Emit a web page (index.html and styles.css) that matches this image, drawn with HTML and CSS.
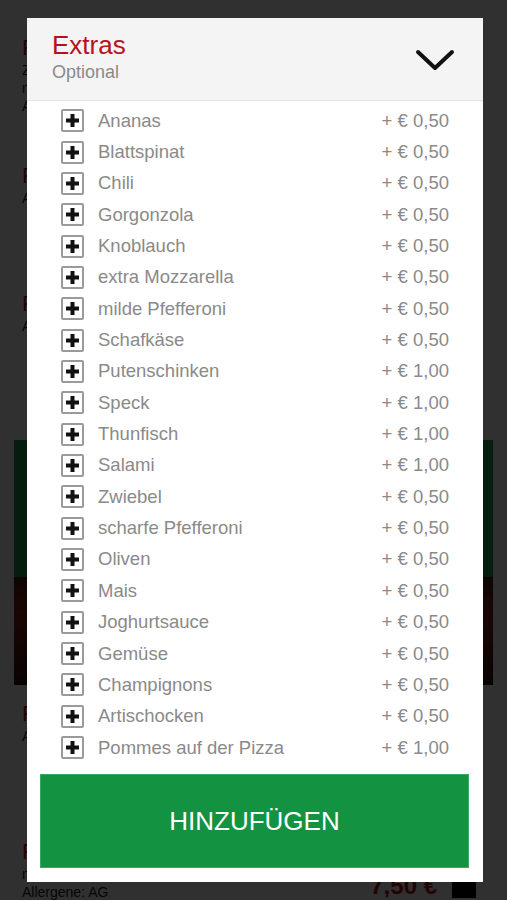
FILE: index.html
```html
<!DOCTYPE html>
<html lang="de">
<head>
    <meta charset="UTF-8">
    <meta name="viewport" content="width=device-width, initial-scale=1.0">
    <title>Extras</title>
    <link rel="stylesheet" href="styles.css">
</head>
<body>

    <div class="page">
        <div class="menu-item">
            <div class="item-info">
                <div class="item-title">Pizza</div>
                <div class="item-desc">Zutaten</div>
                <div class="item-desc">mit</div>
                <div class="item-desc">Allergene</div>
            </div>
        </div>
        <div class="menu-item">
            <div class="item-info">
                <div class="item-title">Pizza</div>
                <div class="item-desc">Allergene</div>
            </div>
        </div>
        <div class="menu-item">
            <div class="item-info">
                <div class="item-title">Pizza</div>
                <div class="item-desc">Allergene</div>
            </div>
        </div>

        <div class="banner"></div>

        <div class="menu-item">
            <div class="item-info">
                <div class="item-title">Pizza</div>
                <div class="item-desc">Allergene</div>
            </div>
        </div>
        <div class="menu-item last">
            <div class="item-info">
                <div class="item-title">Pizza</div>
                <div class="item-desc">mit</div>
                <div class="item-desc">Allergene: AG</div>
            </div>
            <div class="item-buy"><span class="item-price">7,50 €</span><span class="item-add"></span></div>
        </div>
    </div>

    <div class="overlay">
        <div class="modal">
            <div class="modal-header">
                <div class="modal-heading">
                    <div class="modal-title">Extras</div>
                    <div class="modal-sub">Optional</div>
                </div>
                <svg class="chevron" width="40" height="25" viewBox="0 0 40 25">
                    <path d="M3 5 L20 21 L37 5" fill="none" stroke="#111" stroke-width="4" stroke-linecap="round" stroke-linejoin="round"/>
                </svg>
            </div>

            <ul class="extras">
                <li><span class="check"><svg width="13" height="13" viewBox="0 0 13 13"><path d="M4.5 0 H8.5 V4.5 H13 V8.5 H8.5 V13 H4.5 V8.5 H0 V4.5 H4.5 Z" fill="#111"/></svg></span><span class="name">Ananas</span><span class="price">+ € 0,50</span></li>
                <li><span class="check"><svg width="13" height="13" viewBox="0 0 13 13"><path d="M4.5 0 H8.5 V4.5 H13 V8.5 H8.5 V13 H4.5 V8.5 H0 V4.5 H4.5 Z" fill="#111"/></svg></span><span class="name">Blattspinat</span><span class="price">+ € 0,50</span></li>
                <li><span class="check"><svg width="13" height="13" viewBox="0 0 13 13"><path d="M4.5 0 H8.5 V4.5 H13 V8.5 H8.5 V13 H4.5 V8.5 H0 V4.5 H4.5 Z" fill="#111"/></svg></span><span class="name">Chili</span><span class="price">+ € 0,50</span></li>
                <li><span class="check"><svg width="13" height="13" viewBox="0 0 13 13"><path d="M4.5 0 H8.5 V4.5 H13 V8.5 H8.5 V13 H4.5 V8.5 H0 V4.5 H4.5 Z" fill="#111"/></svg></span><span class="name">Gorgonzola</span><span class="price">+ € 0,50</span></li>
                <li><span class="check"><svg width="13" height="13" viewBox="0 0 13 13"><path d="M4.5 0 H8.5 V4.5 H13 V8.5 H8.5 V13 H4.5 V8.5 H0 V4.5 H4.5 Z" fill="#111"/></svg></span><span class="name">Knoblauch</span><span class="price">+ € 0,50</span></li>
                <li><span class="check"><svg width="13" height="13" viewBox="0 0 13 13"><path d="M4.5 0 H8.5 V4.5 H13 V8.5 H8.5 V13 H4.5 V8.5 H0 V4.5 H4.5 Z" fill="#111"/></svg></span><span class="name">extra Mozzarella</span><span class="price">+ € 0,50</span></li>
                <li><span class="check"><svg width="13" height="13" viewBox="0 0 13 13"><path d="M4.5 0 H8.5 V4.5 H13 V8.5 H8.5 V13 H4.5 V8.5 H0 V4.5 H4.5 Z" fill="#111"/></svg></span><span class="name">milde Pfefferoni</span><span class="price">+ € 0,50</span></li>
                <li><span class="check"><svg width="13" height="13" viewBox="0 0 13 13"><path d="M4.5 0 H8.5 V4.5 H13 V8.5 H8.5 V13 H4.5 V8.5 H0 V4.5 H4.5 Z" fill="#111"/></svg></span><span class="name">Schafkäse</span><span class="price">+ € 0,50</span></li>
                <li><span class="check"><svg width="13" height="13" viewBox="0 0 13 13"><path d="M4.5 0 H8.5 V4.5 H13 V8.5 H8.5 V13 H4.5 V8.5 H0 V4.5 H4.5 Z" fill="#111"/></svg></span><span class="name">Putenschinken</span><span class="price">+ € 1,00</span></li>
                <li><span class="check"><svg width="13" height="13" viewBox="0 0 13 13"><path d="M4.5 0 H8.5 V4.5 H13 V8.5 H8.5 V13 H4.5 V8.5 H0 V4.5 H4.5 Z" fill="#111"/></svg></span><span class="name">Speck</span><span class="price">+ € 1,00</span></li>
                <li><span class="check"><svg width="13" height="13" viewBox="0 0 13 13"><path d="M4.5 0 H8.5 V4.5 H13 V8.5 H8.5 V13 H4.5 V8.5 H0 V4.5 H4.5 Z" fill="#111"/></svg></span><span class="name">Thunfisch</span><span class="price">+ € 1,00</span></li>
                <li><span class="check"><svg width="13" height="13" viewBox="0 0 13 13"><path d="M4.5 0 H8.5 V4.5 H13 V8.5 H8.5 V13 H4.5 V8.5 H0 V4.5 H4.5 Z" fill="#111"/></svg></span><span class="name">Salami</span><span class="price">+ € 1,00</span></li>
                <li><span class="check"><svg width="13" height="13" viewBox="0 0 13 13"><path d="M4.5 0 H8.5 V4.5 H13 V8.5 H8.5 V13 H4.5 V8.5 H0 V4.5 H4.5 Z" fill="#111"/></svg></span><span class="name">Zwiebel</span><span class="price">+ € 0,50</span></li>
                <li><span class="check"><svg width="13" height="13" viewBox="0 0 13 13"><path d="M4.5 0 H8.5 V4.5 H13 V8.5 H8.5 V13 H4.5 V8.5 H0 V4.5 H4.5 Z" fill="#111"/></svg></span><span class="name">scharfe Pfefferoni</span><span class="price">+ € 0,50</span></li>
                <li><span class="check"><svg width="13" height="13" viewBox="0 0 13 13"><path d="M4.5 0 H8.5 V4.5 H13 V8.5 H8.5 V13 H4.5 V8.5 H0 V4.5 H4.5 Z" fill="#111"/></svg></span><span class="name">Oliven</span><span class="price">+ € 0,50</span></li>
                <li><span class="check"><svg width="13" height="13" viewBox="0 0 13 13"><path d="M4.5 0 H8.5 V4.5 H13 V8.5 H8.5 V13 H4.5 V8.5 H0 V4.5 H4.5 Z" fill="#111"/></svg></span><span class="name">Mais</span><span class="price">+ € 0,50</span></li>
                <li><span class="check"><svg width="13" height="13" viewBox="0 0 13 13"><path d="M4.5 0 H8.5 V4.5 H13 V8.5 H8.5 V13 H4.5 V8.5 H0 V4.5 H4.5 Z" fill="#111"/></svg></span><span class="name">Joghurtsauce</span><span class="price">+ € 0,50</span></li>
                <li><span class="check"><svg width="13" height="13" viewBox="0 0 13 13"><path d="M4.5 0 H8.5 V4.5 H13 V8.5 H8.5 V13 H4.5 V8.5 H0 V4.5 H4.5 Z" fill="#111"/></svg></span><span class="name">Gemüse</span><span class="price">+ € 0,50</span></li>
                <li><span class="check"><svg width="13" height="13" viewBox="0 0 13 13"><path d="M4.5 0 H8.5 V4.5 H13 V8.5 H8.5 V13 H4.5 V8.5 H0 V4.5 H4.5 Z" fill="#111"/></svg></span><span class="name">Champignons</span><span class="price">+ € 0,50</span></li>
                <li><span class="check"><svg width="13" height="13" viewBox="0 0 13 13"><path d="M4.5 0 H8.5 V4.5 H13 V8.5 H8.5 V13 H4.5 V8.5 H0 V4.5 H4.5 Z" fill="#111"/></svg></span><span class="name">Artischocken</span><span class="price">+ € 0,50</span></li>
                <li><span class="check"><svg width="13" height="13" viewBox="0 0 13 13"><path d="M4.5 0 H8.5 V4.5 H13 V8.5 H8.5 V13 H4.5 V8.5 H0 V4.5 H4.5 Z" fill="#111"/></svg></span><span class="name">Pommes auf der Pizza</span><span class="price">+ € 1,00</span></li>
            </ul>

            <button class="add-btn">HINZUFÜGEN</button>
        </div>
    </div>

</body>
</html>
```

FILE: styles.css
```css
* {
    box-sizing: border-box;
}
body {
    font-family: "Liberation Sans", Arial, sans-serif;
    margin: 0;
    padding: 0;
    background-color: white;
    overflow: hidden;
}

/* pagina dietro al popup */
.page {
    padding: 19px 14px 0 14px;
}
.menu-item {
    display: flex;
    justify-content: space-between;
    align-items: center;
    height: 128px;
    padding: 0 17px 0 8px;
}
.menu-item.last {
    height: 132px;
    padding-top: 14px;
}
.item-info {
    align-self: flex-start;
    padding-top: 16px;
}
.menu-item.last .item-info {
    padding-top: 12px;
}
.item-title {
    color: #b5121b;
    font-size: 22px;
    line-height: 26px;
}
.item-desc {
    color: #222;
    font-size: 14px;
    line-height: 18px;
}
.item-buy {
    display: flex;
    align-items: center;
    gap: 15px;
}
.item-price {
    color: #b5121b;
    font-size: 24px;
    font-weight: bold;
}
.item-add {
    width: 24px;
    height: 24px;
    background-color: #000;
}
.banner {
    margin-top: 37px;
    height: 245px;
    background: linear-gradient(#1f9a4a 0, #1f9a4a 56%, #4a1a12 56%, #8a2418 70%, #2a1410 100%);
}

/* popup */
.overlay {
    position: fixed;
    top: 0;
    left: 0;
    right: 0;
    bottom: 0;
    background-color: rgba(0, 0, 0, 0.81);
    display: flex;
    padding: 18px 24px 18px 27px;
}
.modal {
    flex: 1;
    display: flex;
    flex-direction: column;
    background-color: white;
}
.modal-header {
    display: flex;
    justify-content: space-between;
    align-items: flex-start;
    background-color: #f4f4f4;
    border-bottom: 1px solid #e3e3e3;
    padding: 12px 28px 17px 25px;
}
.modal-title {
    color: #b5121b;
    font-size: 26px;
    line-height: 30px;
}
.modal-sub {
    color: #8a8a8a;
    font-size: 18px;
    line-height: 22px;
    margin-top: 1px;
}
.chevron {
    margin-top: 17px;
}
.extras {
    flex: 1;
    list-style: none;
    margin: 0;
    padding: 4px 0 10px 0;
}
.extras li {
    display: flex;
    align-items: center;
    height: 31.35px;
    padding: 0 34px;
    color: #8a8a8a;
    font-size: 18.5px;
}
.check {
    width: 23px;
    height: 23px;
    border: 2px solid #9a9a9a;
    border-radius: 2px;
    background-color: white;
    display: flex;
    align-items: center;
    justify-content: center;
    margin-right: 14px;
}
.check svg {
    display: block;
}
.name {
    flex: 1;
}
.add-btn {
    height: 94px;
    margin: 0 14px 14px 13px;
    background-color: #139241; /* verde */
    border: 1px solid #3aa75e;
    color: white;
    font-family: "Liberation Sans", Arial, sans-serif;
    font-size: 26px;
    padding: 0;
    cursor: pointer;
}
```
